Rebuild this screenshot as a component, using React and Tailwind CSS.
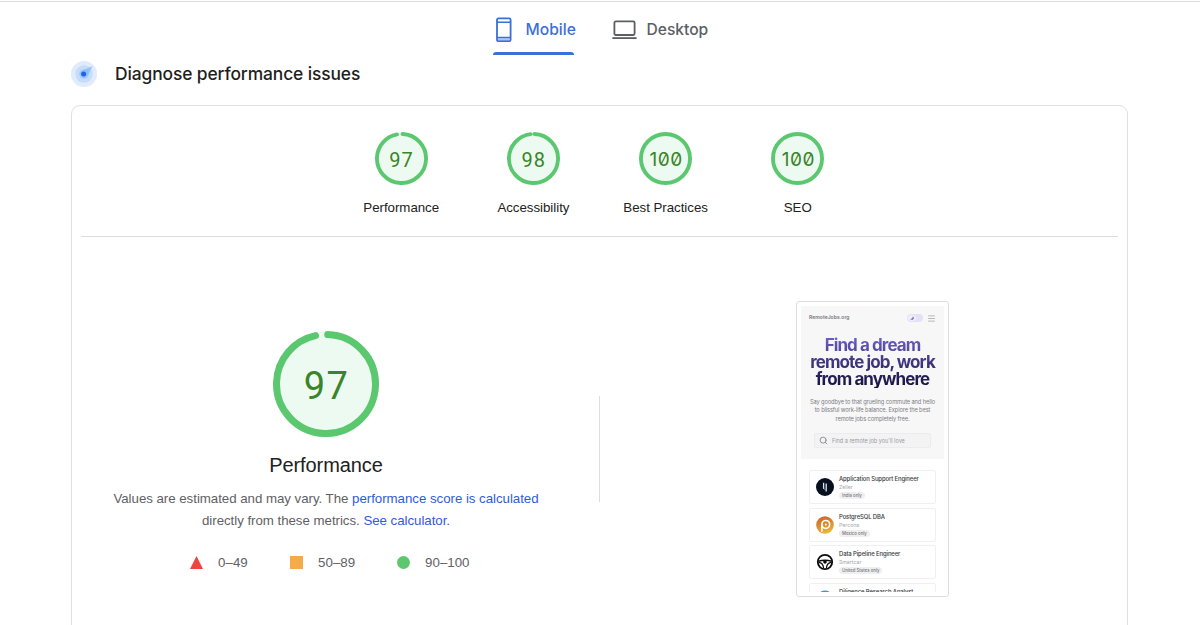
import React from 'react';
import { Menu, Search } from 'lucide-react';

const categories = [
  { label: 'Performance', score: 97 },
  { label: 'Accessibility', score: 98 },
  { label: 'Best Practices', score: 100 },
  { label: 'SEO', score: 100 },
];

const ZellerLogo = () => (
  <svg viewBox="0 0 18 18" className="w-[18px] h-[18px]">
    <circle cx="9" cy="9" r="9" fill="#07101f" />
    <path d="M7.6 4.8v6.2M10.2 5.4v8" stroke="#dfe3e8" strokeWidth="1.3" fill="none" />
    <path d="M7.6 10.4l2.6 2.4" stroke="#8a929d" strokeWidth="0.8" />
  </svg>
);

const PerconaLogo = () => (
  <svg viewBox="0 0 18 18" className="w-[18px] h-[18px]">
    <defs>
      <linearGradient id="percona" x1="0" y1="0" x2="0.3" y2="1">
        <stop offset="0" stopColor="#c9622c" />
        <stop offset="0.55" stopColor="#d98a30" />
        <stop offset="1" stopColor="#e8b640" />
      </linearGradient>
    </defs>
    <circle cx="9" cy="9" r="8.8" fill="url(#percona)" />
    <circle cx="9.8" cy="8.4" r="3.9" fill="none" stroke="#fff" strokeWidth="1.6" />
    <path d="M5.9 8.4v7.4" stroke="#fff" strokeWidth="1.6" />
    <circle cx="9.8" cy="8.4" r="1" fill="#fff" />
  </svg>
);

const SmartcarLogo = () => (
  <svg viewBox="0 0 18 18" className="w-[18px] h-[18px]" fill="none" stroke="#0b0b0b">
    <circle cx="9" cy="9" r="7.2" strokeWidth="1.8" />
    <path d="M2.2 8.3q6.8-2.2 13.6 0" strokeWidth="1.6" />
    <path d="M2.6 9.3q4.6.4 5 6M15.4 9.3q-4.6.4-5 6" strokeWidth="1.2" />
    <circle cx="9" cy="8.9" r="1.4" fill="#0b0b0b" strokeWidth="0.8" />
  </svg>
);

const jobs = [
  { title: 'Application Support Engineer', company: 'Zeller', place: 'India only', Logo: ZellerLogo },
  { title: 'PostgreSQL DBA', company: 'Percona', place: 'Mexico only', Logo: PerconaLogo },
  { title: 'Data Pipeline Engineer', company: 'Smartcar', place: 'United States only', Logo: SmartcarLogo },
];

const Gauge = ({ score, size, stroke, textClass }) => {
  const r = (size - stroke) / 2;
  const length = 2 * Math.PI * r;
  const full = score === 100;
  // round caps eat into the gap, so the arc starts and ends half a stroke early
  const arc = full ? length : (score / 100) * length - stroke / 2;

  return (
    <div className="grid place-items-center" style={{ width: size, height: size }}>
      <svg className="col-start-1 row-start-1" width={size} height={size}>
        <circle cx={size / 2} cy={size / 2} r={size / 2 - 0.5} fill="#edfaf1" />
        <circle
          cx={size / 2}
          cy={size / 2}
          r={r}
          fill="none"
          stroke="#5bc870"
          strokeWidth={stroke}
          strokeLinecap={full ? 'butt' : 'round'}
          strokeDasharray={full ? undefined : `${arc} ${length}`}
          transform={`rotate(${full ? -90 : -90 + (stroke / 4 / r) * 57.3} ${size / 2} ${size / 2})`}
        />
      </svg>
      <span className={`col-start-1 row-start-1 text-[#3a8429] leading-none ${textClass}`}>{score}</span>
    </div>
  );
};

const Tabs = () => (
  <div className="flex h-[53px] pl-[492.5px] font-['Inter',sans-serif] text-[15.6px] font-medium">
    <div className="w-[81px] h-full flex flex-col">
      <div className="h-[50px] pt-[5px] pl-[2px] flex items-center text-[#3c6fd8]">
        <svg width="18" height="26" viewBox="0 0 18 26" className="shrink-0" fill="none" stroke="currentColor" strokeWidth="1.8">
          <rect x="2" y="1.4" width="13.6" height="22.8" rx="1.4" />
          <path d="M2 5.2h13.6M2 20.6h13.6" strokeWidth="1.6" />
          <path d="M3 22.4h11.6" stroke="#a9c3f5" strokeWidth="1.4" />
        </svg>
        <span className="ml-[13px]">Mobile</span>
      </div>
      <div className="h-[3px] rounded-t-[3px] bg-[#3c6fd8]" />
    </div>
    <div className="h-[50px] ml-[38px] pt-[5px] flex items-center text-[#5b5e62]">
      <svg width="25" height="20" viewBox="0 0 25 20" fill="none" stroke="currentColor" strokeWidth="1.8">
        <rect x="2.4" y="1.4" width="20.2" height="13.6" rx="1.4" />
        <path d="M0.4 18.1h24.2" />
      </svg>
      <span className="ml-[10px]">Desktop</span>
    </div>
  </div>
);

const SectionHeading = () => (
  <div className="flex items-center h-[26px] mt-[6px] pl-[71px]">
    <svg width="26" height="26" viewBox="0 0 26 26">
      <circle cx="13" cy="13" r="13" fill="#e0ebfb" />
      <circle cx="13" cy="13" r="8.7" fill="#c7dcfb" />
      <circle cx="13" cy="13" r="4.8" fill="#a6cafa" />
      <path d="M21.6 4.9l-4.4 8.6-4.3 3.6-4.2-4.6 3.9-3.6z" fill="#7dbcf5" opacity="0.75" />
      <circle cx="12.6" cy="13" r="2.5" fill="#2162ea" />
    </svg>
    <h1 className="ml-[18px] font-['Inter',sans-serif] text-[17.4px] font-[450] tracking-[-0.11px] text-[#1d1e20] whitespace-nowrap">
      Diagnose performance issues
    </h1>
  </div>
);

const JobCard = ({ title, company, place, Logo }) => (
  <div className="h-[34px] flex items-center pl-[6px] gap-[5px] border border-[#f0f0f1] rounded-xs bg-white">
    <Logo />
    <div className="flex flex-col items-start whitespace-nowrap">
      <span className="text-[5.9px] leading-[8px] font-medium tracking-[-0.1px] text-[#35363a]">{title}</span>
      <span className="text-[5.2px] leading-[9px] text-[#a4a5aa]">{company}</span>
      <span className="px-[3px] rounded-full bg-[#efeff1] text-[4.3px] leading-[7px] font-medium text-[#77787d]">
        {place}
      </span>
    </div>
  </div>
);

const PagePreview = () => (
  <div className="w-[153px] h-[296px] p-1 border border-[#dcdddf] rounded-[3px] font-['Inter',sans-serif]">
    <div className="h-full overflow-hidden">
      <div className="h-[153px] bg-[#f7f7f8] px-[8px] flex flex-col">
        <div className="h-[24px] flex items-center text-[5px]">
          <span className="font-semibold tracking-[0.05px] text-[#74757a]">RemoteJobs.org</span>
          <span className="ml-auto w-4 h-[8px] rounded-full bg-[#e4e1f7] p-[1px] flex">
            <span className="w-[8px] h-[6px] rounded-full bg-[#f0eefb] grid place-items-center">
              <svg width="4" height="4" viewBox="0 0 4 4">
                <path d="M2.6.2A1.9 1.9 0 1 1 .2 2.8 2 2 0 0 0 2.6.2z" fill="#6f68a0" />
              </svg>
            </span>
          </span>
          <Menu className="ml-[4px] w-[9px] h-[9px] text-[#a3a4a8]" strokeWidth={2} />
        </div>
        <h2 className="-mx-1 mt-[7px] text-center text-[17px] leading-[17px] font-bold tracking-[-0.92px] whitespace-nowrap text-transparent bg-clip-text bg-linear-to-b from-[#6e60c6] to-[#15103c]">
          Find a dream
          <br />
          remote job, work
          <br />
          from anywhere
        </h2>
        <p className="-mx-1 mt-[10px] text-center text-[5.7px] leading-[8.4px] tracking-[-0.11px] whitespace-nowrap text-[#7b7c82]">
          Say goodbye to that grueling commute and hello
          <br />
          to blissful work-life balance. Explore the best
          <br />
          remote jobs completely free.
        </p>
        <div className="mt-[10px] mx-[5px] h-[15px] flex items-center pl-1 gap-[4px] border border-[#ececee] rounded-xs bg-[#f3f3f4] text-[5.5px] text-[#98999e] whitespace-nowrap">
          <Search className="w-[9px] h-[9px] text-[#808187]" strokeWidth={2.2} />
          Find a remote job you'll love
        </div>
      </div>
      <div className="px-[8px] pt-[11px] flex flex-col gap-[3.5px]">
        {jobs.map((job) => (
          <JobCard key={job.title} {...job} />
        ))}
        <div className="h-[34px] shrink-0 flex items-start pt-[4px] pl-[6px] gap-[5px] border border-[#f0f0f1] rounded-xs">
          <svg width="18" height="18" viewBox="0 0 18 18" className="mt-[2px]">
            <circle cx="9" cy="9" r="8.5" fill="#fff" />
            <path d="M5.2 2.2q3.8-2 7.6 0" fill="none" stroke="#4899b0" strokeWidth="1.6" />
          </svg>
          <span className="text-[5.9px] leading-[8px] font-medium tracking-[-0.1px] text-[#35363a] whitespace-nowrap">Diligence Research Analyst</span>
        </div>
      </div>
    </div>
  </div>
);

const Legend = () => (
  <div className="mt-[21px] ml-[7.6px] flex items-center h-5 text-[13.3px] text-[#5f6164]">
    <svg width="13" height="13" viewBox="0 0 13 13" className="-mt-px">
      <path d="M6.5 0L13 13H0z" fill="#ee4540" />
    </svg>
    <span className="ml-[15px] w-[30px] whitespace-nowrap">0–49</span>
    <span className="ml-[42px] -mt-px w-[13px] h-[13px] bg-[#f5ab49]" />
    <span className="ml-[15px] w-[37px] whitespace-nowrap">50–89</span>
    <span className="ml-[42px] -mt-px w-[13px] h-[13px] rounded-full bg-[#5bc870]" />
    <span className="ml-[15px] whitespace-nowrap">90–100</span>
  </div>
);

const App = () => {
  return (
    <div className="w-[1200px] h-[625px] overflow-hidden bg-white font-['Liberation_Sans',Arial,sans-serif]">
      <div className="h-[2px] border-b border-[#dcdddf]" />
      <Tabs />
      <SectionHeading />

      <div className="mt-[18px] ml-[71px] w-[1057px] h-[540px] border border-[#dfe0e2] rounded-[9px] px-[9px]">
        {/* Category scores */}
        <div className="h-[131px] pt-[26px] flex justify-center border-b border-[#dcdddf]">
          {categories.map(({ label, score }) => (
            <div key={label} className="w-[132.2px] flex flex-col items-center">
              <Gauge
                score={score}
                size={53}
                stroke={3.9}
                textClass={
                  score === 100
                    ? "font-['Inter',monospace] text-[19px] font-normal tracking-[0.5px] pl-[1px] pt-[2px] slashed-zero"
                    : "font-['Roboto',monospace] text-[20px] tracking-[0.9px] pl-[0.5px] pt-[3px]"
                }
              />
              <span className="mt-[13px] text-[13.3px] leading-5 tracking-[-0.03px] text-[#212121]">{label}</span>
            </div>
          ))}
        </div>

        {/* Performance detail */}
        <div className="flex">
          <div className="w-[490px] pt-[94px] flex flex-col items-center">
            <Gauge
              score={97}
              size={106}
              stroke={7}
              textClass="font-['Roboto',monospace] text-[38px] tracking-[1.4px] pl-[1px] pt-[3px]"
            />
            <h2 className="mt-[16px] text-[20px] leading-6 tracking-[-0.1px] text-[#212121]">Performance</h2>
            <p className="mt-[11px] text-center text-[13.3px] leading-[22px] tracking-[-0.04px] text-[#5f6164] whitespace-nowrap">
              Values are estimated and may vary. The{' '}
              <a className="text-[#2f5bdc]">performance score is calculated</a>
              <br />
              directly from these metrics. <a className="text-[#2f5bdc]">See calculator.</a>
            </p>
            <Legend />
          </div>
          <div className="w-px h-[106px] ml-[28px] mt-[159px] bg-[#dcdddf]" />
          <div className="flex-1 flex justify-center pt-[64px] pl-[27px]">
            <PagePreview />
          </div>
        </div>
      </div>
    </div>
  );
};

export default App;
